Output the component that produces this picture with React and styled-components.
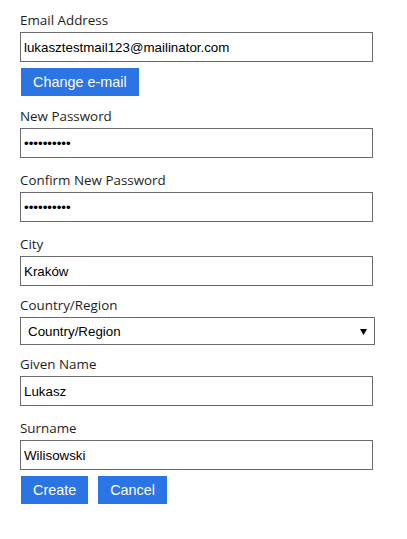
import { useEffect, useRef } from "react"
import styled, { createGlobalStyle } from "styled-components"

const Global = createGlobalStyle`
    body {
        margin: 0;
        background: #fff;
        font-family: "Open Sans", "Noto Sans", sans-serif;
    }
`

const Form = styled.form`
    display: flex;
    flex-direction: column;
    padding: 12px 0 0 20px;
    width: 355px;
`

const Field = styled.div`
    display: flex;
    flex-direction: column;
    margin-bottom: ${props => props.$gap ?? 14}px;
`

const Label = styled.label`
    color: #1e1e1e;
    font-size: 13.4px;
    line-height: 17px;
    height: 20px;
`

const Input = styled.input`
    box-sizing: border-box;
    width: 353px;
    height: 30px;
    margin: 0;
    padding: 0 3px;
    border: 1px solid #6b6b6b;
    border-radius: 0;
    font-family: "Liberation Sans", Arial, sans-serif;
    font-size: 13.33px;
    color: #000;
    outline: none;
`

const SelectWrap = styled.div`
    position: relative;
    width: 355px;
`

const Select = styled.select`
    box-sizing: border-box;
    width: 355px;
    height: 28px;
    margin: 0;
    padding: 0 7px;
    appearance: none;
    background: #fff;
    border: 1px solid #6b6b6b;
    border-radius: 0;
    font-family: "Liberation Sans", Arial, sans-serif;
    font-size: 13.33px;
    color: #000;
`

const Arrow = styled.svg`
    position: absolute;
    right: 8px;
    top: 12px;
    pointer-events: none;
`

const Buttons = styled.div`
    display: flex;
    gap: 10px;
    margin-top: 6px;
    margin-left: 1px;
`

const Button = styled.button`
    height: 28px;
    padding: 0 12px;
    border: none;
    border-radius: 0;
    background: #2b74e4;
    color: #fff;
    font-family: "Liberation Sans", Arial, sans-serif;
    font-size: 14.4px;
    cursor: pointer;
    align-self: flex-start;
`

export default function App() {
    const surnameRef = useRef(null)

    useEffect(() => {
        const el = surnameRef.current
        el.focus()
        el.setSelectionRange(el.value.length, el.value.length)
    }, [])

    return (
        <>
            <Global />
            <Form onSubmit={e => e.preventDefault()}>
                <Field $gap={0}>
                    <Label>Email Address</Label>
                    <Input defaultValue="lukasztestmail123@mailinator.com" />
                </Field>
                <Buttons>
                    <Button type="button">Change e-mail</Button>
                </Buttons>
                <Field style={{ marginTop: 12 }}>
                    <Label>New Password</Label>
                    <Input type="password" defaultValue="1234567890" />
                </Field>
                <Field>
                    <Label>Confirm New Password</Label>
                    <Input type="password" defaultValue="1234567890" />
                </Field>
                <Field $gap={11}>
                    <Label>City</Label>
                    <Input defaultValue="Kraków" />
                </Field>
                <Field $gap={11}>
                    <Label>Country/Region</Label>
                    <SelectWrap>
                        <Select defaultValue="">
                            <option value="">Country/Region</option>
                        </Select>
                        <Arrow width="7" height="6" viewBox="0 0 7 6">
                            <path d="M0 0h7L3.5 6z" fill="#000" />
                        </Arrow>
                    </SelectWrap>
                </Field>
                <Field>
                    <Label>Given Name</Label>
                    <Input defaultValue="Lukasz" />
                </Field>
                <Field $gap={0}>
                    <Label>Surname</Label>
                    <Input ref={surnameRef} defaultValue="Wilisowski" />
                </Field>
                <Buttons>
                    <Button type="submit">Create</Button>
                    <Button type="button">Cancel</Button>
                </Buttons>
            </Form>
        </>
    )
}
